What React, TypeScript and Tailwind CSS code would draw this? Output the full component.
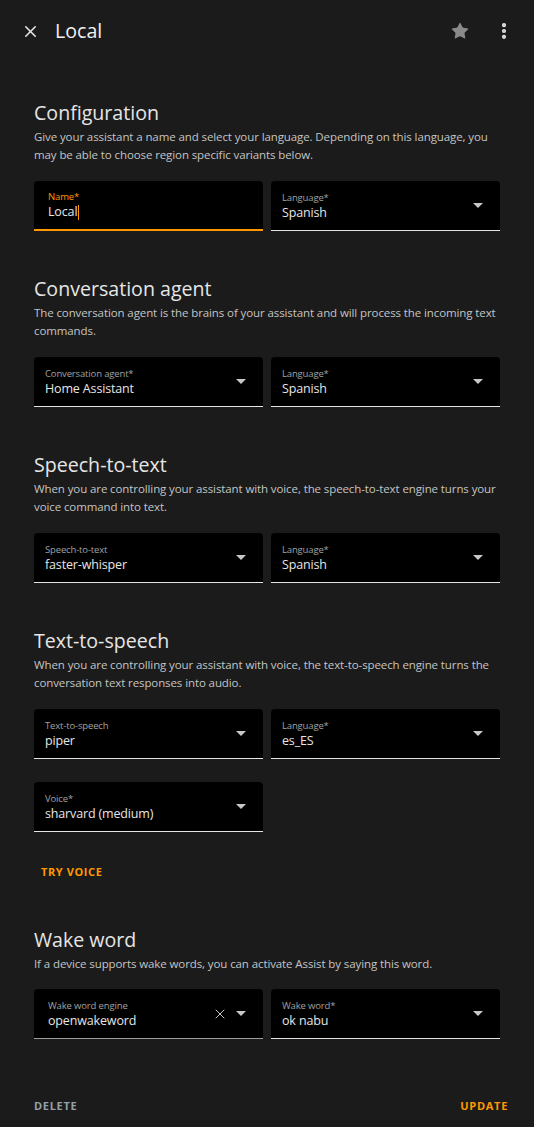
import { X, Star, EllipsisVertical } from "lucide-react";

function Arrow() {
  return (
    <svg width="10" height="5" viewBox="0 0 10 5" className="shrink-0">
      <path d="M0 0 L10 0 L5 5 Z" fill="#c8c8c8" />
    </svg>
  );
}

interface FieldProps {
  label: string;
  value: string;
  select?: boolean;
  focused?: boolean;
  clearable?: boolean;
  textLike?: boolean;
}

function Field({ label, value, select = true, focused, clearable, textLike }: FieldProps) {
  const border = focused
    ? "border-b-2 border-[#ff9800]"
    : clearable
      ? "border-b border-[#9e9e9e]"
      : "border-b border-[#e6e6e6]";
  return (
    <div
      className={`h-[50px] bg-black rounded-t-[4px] flex items-center ${border} ${
        textLike ? "pl-[14px]" : "pl-[11px]"
      } pr-[17px]`}
    >
      <div className="flex-1 min-w-0 flex flex-col pt-[1px]">
        <span
          className={`text-[9.5px] leading-[13px] tracking-[-0.15px] ${
            focused ? "text-[#ff9800]" : "text-[#a0a0a0]"
          }`}
        >
          {label}
        </span>
        <span className="text-[12.5px] leading-[18px] tracking-[-0.15px] text-[#e6e6e6] flex items-center">
          {value}
          {focused && <span className="inline-block w-[1px] h-[15px] bg-[#ff9800] ml-[1px]" />}
        </span>
      </div>
      {clearable && <X size={16} strokeWidth={1.5} className="text-[#c8c8c8] mr-[8px]" />}
      {select && <Arrow />}
    </div>
  );
}

function Desc({ children }: { children: React.ReactNode }) {
  return (
    <p className="mt-[1px] text-[11.5px] leading-[18px] tracking-[-0.1px] text-[#c4c4c4]">
      {children}
    </p>
  );
}

function Section({
  title,
  desc,
  children,
}: {
  title: string;
  desc: string;
  children: React.ReactNode;
}) {
  return (
    <section className="flex flex-col">
      <h2 className="text-[19.6px] leading-[28px] text-[#e6e6e6]">{title}</h2>
      <Desc>{desc}</Desc>
      <div className="mt-[17px] flex flex-col gap-[23px]">{children}</div>
    </section>
  );
}

export default function App() {
  return (
    <div
      className="min-h-[1127px] w-[534px] bg-[#1b1b1b] text-[#e6e6e6]"
      style={{ fontFamily: '"Open Sans", "Noto Sans", sans-serif' }}
    >
      <header className="h-[62px] flex items-center pl-[21px] pr-[20px]">
        <X size={19} strokeWidth={2} className="text-[#e6e6e6]" />
        <h1 className="ml-[15px] text-[19.6px] leading-none text-[#f0f0f0]">Local</h1>
        <div className="ml-auto flex items-center gap-[24px]">
          <Star size={20} fill="#8a8a8a" stroke="none" />
          <EllipsisVertical size={20} strokeWidth={3} className="text-[#e6e6e6]" />
        </div>
      </header>

      <main className="px-[34px] pt-[37px] flex flex-col gap-[44px]">
        <Section
          title="Configuration"
          desc="Give your assistant a name and select your language. Depending on this language, you may be able to choose region specific variants below."
        >
          <div className="grid grid-cols-2 gap-[8px]">
            <Field label="Name*" value="Local" select={false} focused textLike />
            <Field label="Language*" value="Spanish" />
          </div>
        </Section>

        <Section
          title="Conversation agent"
          desc="The conversation agent is the brains of your assistant and will process the incoming text commands."
        >
          <div className="grid grid-cols-2 gap-[8px]">
            <Field label="Conversation agent*" value="Home Assistant" />
            <Field label="Language*" value="Spanish" />
          </div>
        </Section>

        <Section
          title="Speech-to-text"
          desc="When you are controlling your assistant with voice, the speech-to-text engine turns your voice command into text."
        >
          <div className="grid grid-cols-2 gap-[8px]">
            <Field label="Speech-to-text" value="faster-whisper" />
            <Field label="Language*" value="Spanish" />
          </div>
        </Section>

        <section className="flex flex-col">
          <h2 className="text-[19.6px] leading-[28px] text-[#e6e6e6]">Text-to-speech</h2>
          <Desc>
            When you are controlling your assistant with voice, the text-to-speech engine turns the
            conversation text responses into audio.
          </Desc>
          <div className="mt-[17px] grid grid-cols-2 gap-[8px]">
            <Field label="Text-to-speech" value="piper" />
            <Field label="Language*" value="es_ES" />
          </div>
          <div className="mt-[23px] grid grid-cols-2 gap-[8px]">
            <Field label="Voice*" value="sharvard (medium)" />
          </div>
          <button className="mt-[22px] self-start h-[36px] px-[7px] text-[11px] font-bold tracking-[0.6px] text-[#ff9800]">
            TRY VOICE
          </button>
        </section>

        <section className="flex flex-col -mt-[8px]">
          <h2 className="text-[19.6px] leading-[28px] text-[#e6e6e6]">Wake word</h2>
          <Desc>If a device supports wake words, you can activate Assist by saying this word.</Desc>
          <div className="mt-[16px] grid grid-cols-2 gap-[8px]">
            <Field label="Wake word engine" value="openwakeword" clearable textLike />
            <Field label="Wake word*" value="ok nabu" />
          </div>
        </section>
      </main>

      <footer className="mt-[49px] flex items-center justify-between pl-[34px] pr-[26px] h-[36px]">
        <button className="text-[11px] font-bold tracking-[0.7px] text-[#93a0a8]">DELETE</button>
        <button className="text-[11px] font-bold tracking-[0.7px] text-[#ff9800]">UPDATE</button>
      </footer>
    </div>
  );
}
